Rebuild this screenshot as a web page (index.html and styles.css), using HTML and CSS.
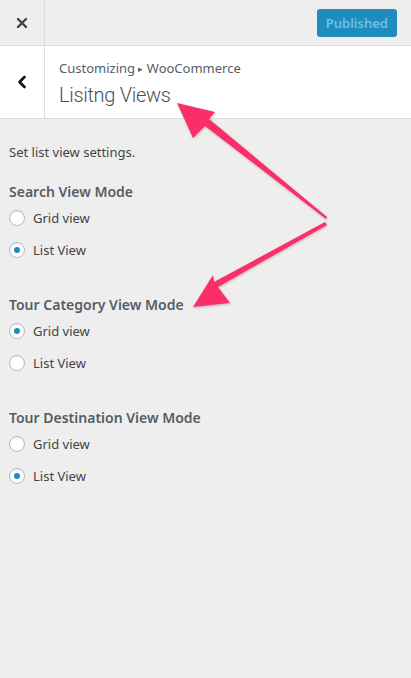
FILE: index.html
```html
<!DOCTYPE html>
<html lang="en">
<head>
  <meta charset="UTF-8" />
  <meta name="viewport" content="width=device-width, initial-scale=1.0" />
  <title>Customizing - Listing Views</title>
  <link rel="stylesheet" href="styles.css">
</head>
<body>
  <header class="topbar">
    <a class="close" href="#" aria-label="Close">
      <svg width="12" height="12" viewBox="0 0 12 12"><path d="M2 2 L10 10 M10 2 L2 10" stroke="#3c434a" stroke-width="2.4" stroke-linecap="round"/></svg>
    </a>
    <button class="publish" disabled>Published</button>
  </header>

  <div class="section-head">
    <a class="back" href="#" aria-label="Back">
      <svg width="10" height="14" viewBox="0 0 10 14"><path d="M7.5 2 L2.5 7 L7.5 12" fill="none" stroke="#111" stroke-width="2.6" stroke-linecap="round" stroke-linejoin="round"/></svg>
    </a>
    <div class="titles">
      <span class="crumb">Customizing <span class="caret">&#9656;</span> WooCommerce</span>
      <h2>Lisitng Views</h2>
    </div>
  </div>

  <main class="content">
    <p class="desc">Set list view settings.</p>

    <fieldset class="control">
      <legend>Search View Mode</legend>
      <label class="radio"><input type="radio" name="search"> Grid view</label>
      <label class="radio"><input type="radio" name="search" checked> List View</label>
    </fieldset>

    <fieldset class="control">
      <legend>Tour Category View Mode</legend>
      <label class="radio"><input type="radio" name="category" checked> Grid view</label>
      <label class="radio"><input type="radio" name="category"> List View</label>
    </fieldset>

    <fieldset class="control">
      <legend>Tour Destination View Mode</legend>
      <label class="radio"><input type="radio" name="destination"> Grid view</label>
      <label class="radio"><input type="radio" name="destination" checked> List View</label>
    </fieldset>
  </main>

  <!-- annotation arrows -->
  <svg class="arrows" width="411" height="678" viewBox="0 0 411 678">
    <defs>
      <filter id="sh" x="-20%" y="-20%" width="140%" height="140%">
        <feDropShadow dx="0.5" dy="1" stdDeviation="1" flood-color="#000" flood-opacity="0.25"/>
      </filter>
    </defs>
    <g fill="#fb2d6a" filter="url(#sh)">
      <polygon points="327,217 326,219 205,126 193,138 177,103 215,112 209,119"/>
      <polygon points="325,222 327,225 218,287 230,303 193,307 213,275 214,282"/>
    </g>
  </svg>
</body>
</html>
```

FILE: styles.css
```css
body {
  margin: 0;
  font-family: "Noto Sans", Arial, sans-serif;
  background-color: #eeeeee;
  color: #444;
  width: 411px;
  height: 678px;
  position: relative;
  overflow: hidden;
}

.topbar {
  display: flex;
  justify-content: space-between;
  align-items: center;
  height: 45px;
  border-bottom: 1px solid #dddddd;
}

.close {
  display: flex;
  align-items: center;
  justify-content: center;
  width: 44px;
  height: 45px;
  border-right: 1px solid #dddddd;
}

.publish {
  margin-right: 14px;
  height: 28px;
  padding: 0 9px;
  border: none;
  border-radius: 3px;
  background-color: #1e8cbe;
  color: #71bfe3;
  font-family: inherit;
  font-size: 13px;
  font-weight: 600;
}

.section-head {
  display: flex;
  background-color: #fff;
  border-bottom: 1px solid #dddddd;
  height: 72px;
}

.back {
  display: flex;
  align-items: center;
  justify-content: center;
  width: 44px;
  border-right: 1px solid #dddddd;
}

.titles {
  padding: 13px 14px 0;
}

.crumb {
  display: block;
  font-size: 13px;
  color: #555d66;
  line-height: 18px;
}

.caret {
  font-size: 9px;
  vertical-align: 1px;
}

.titles h2 {
  margin: 4px 0 0;
  font-family: Roboto, "Noto Sans", sans-serif;
  font-size: 20px;
  font-weight: 300;
  letter-spacing: -0.3px;
  color: #4a5058;
  line-height: 26px;
}

.content {
  padding: 24px 9px 0;
}

.desc {
  margin: 0 0 21px;
  font-size: 13px;
  line-height: 18px;
  color: #444;
}

.control {
  border: none;
  margin: 0 0 29px;
  padding: 0;
  display: flex;
  flex-direction: column;
}

.control legend {
  padding: 0;
  margin-bottom: 0;
  font-size: 14px;
  font-weight: 600;
  color: #555d66;
  line-height: 20px;
}

.radio {
  display: flex;
  align-items: center;
  gap: 8px;
  height: 32px;
  font-size: 13px;
  color: #444;
}

.radio input {
  appearance: none;
  margin: 0;
  width: 16px;
  height: 16px;
  border: 1px solid #b4b9be;
  border-radius: 50%;
  background-color: #fff;
  box-shadow: inset 0 1px 2px rgba(0, 0, 0, 0.07);
  display: flex;
  align-items: center;
  justify-content: center;
}

.radio input:checked::before {
  content: "";
  width: 6px;
  height: 6px;
  border-radius: 50%;
  background-color: #1e8cbe;
}

.arrows {
  position: absolute;
  top: 0;
  left: 0;
  pointer-events: none;
}
```
